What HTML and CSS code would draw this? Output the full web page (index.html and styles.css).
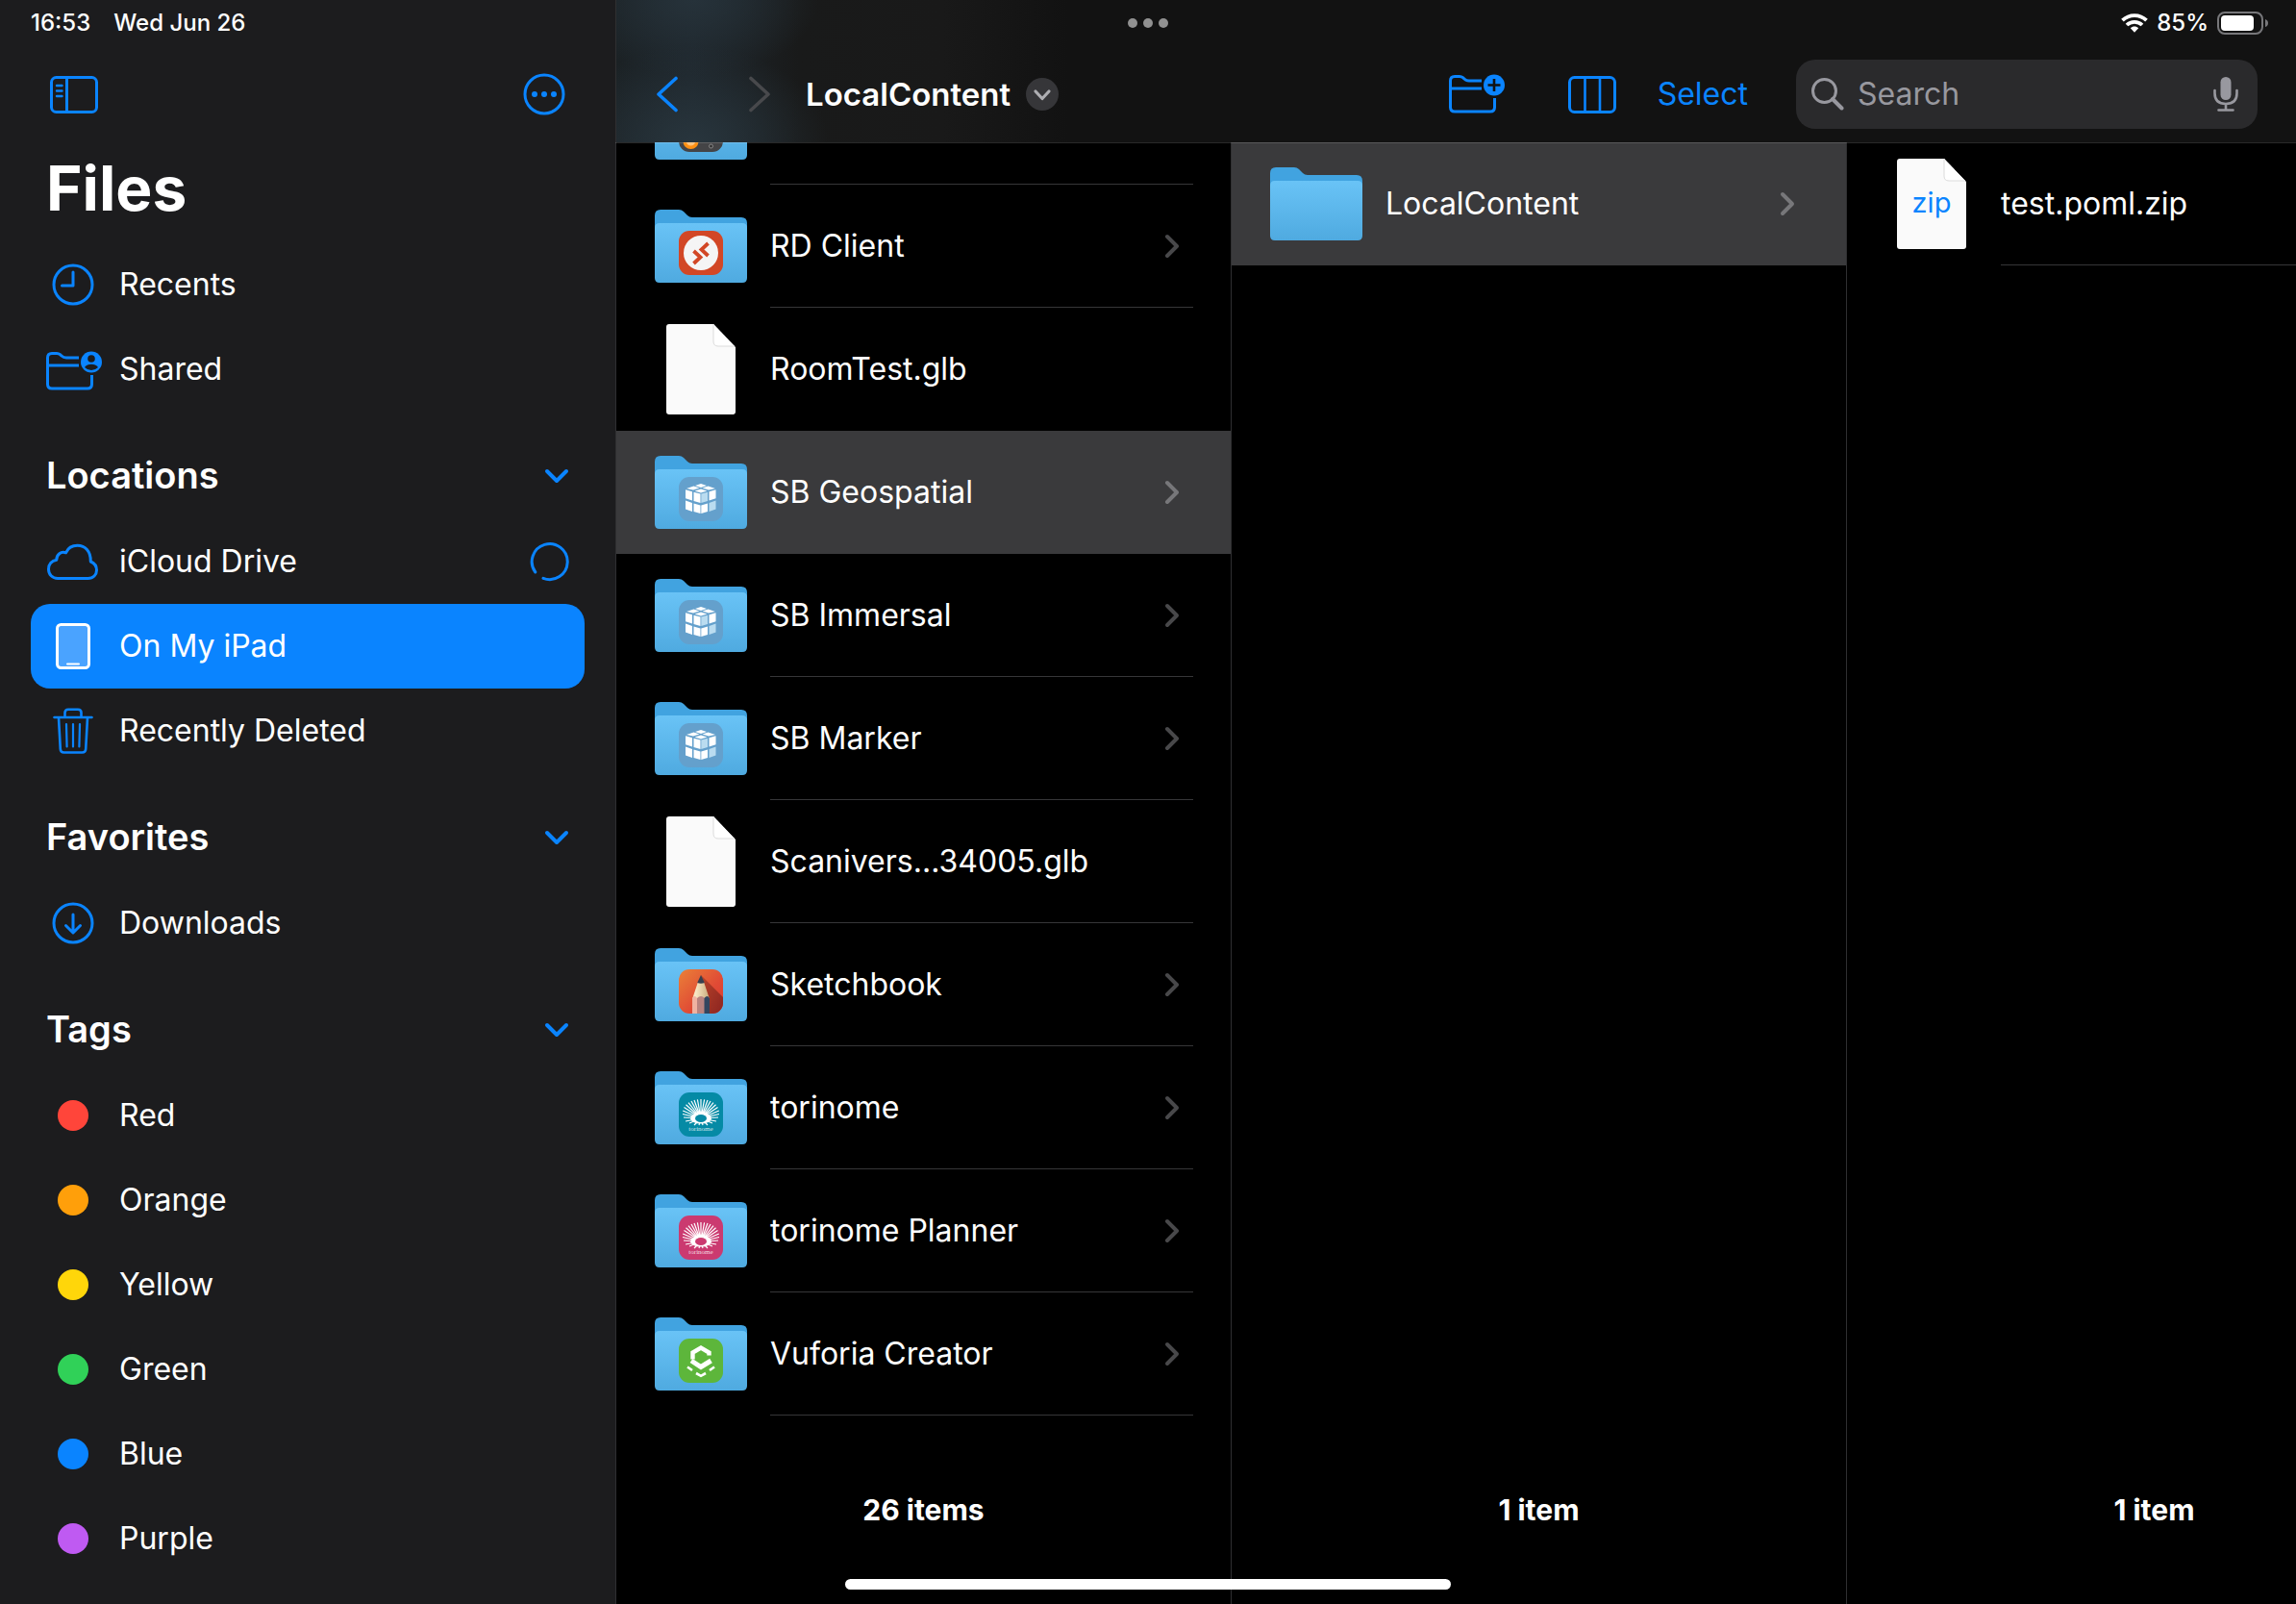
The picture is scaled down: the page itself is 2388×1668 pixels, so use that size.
FILE: index.html
```
<!DOCTYPE html>
<html lang="en">
<head>
<meta charset="utf-8">
<meta name="viewport" content="width=device-width, initial-scale=1">
<title>Files</title>
<link rel="stylesheet" href="styles.css">
</head>
<body>
<svg class="sprite" aria-hidden="true">
  <defs>
    <linearGradient id="folder-front" x1="0" y1="0" x2="0" y2="1"><stop offset="0" stop-color="#69c3f6"/><stop offset="1" stop-color="#4faae0"/></linearGradient>
    <linearGradient id="sketch-bg" x1="0" y1="0" x2="1" y2="1"><stop offset="0" stop-color="#ea8038"/><stop offset=".6" stop-color="#e04a35"/><stop offset="1" stop-color="#d8392f"/></linearGradient>
    <linearGradient id="sketch-shade" x1="0" y1="0" x2="1" y2="1"><stop offset="0" stop-color="#b8442a"/><stop offset="1" stop-color="#8c2420"/></linearGradient>
    <linearGradient id="wood" x1="0" y1="0" x2="1" y2="0"><stop offset=".2" stop-color="#f8e8c4"/><stop offset="1" stop-color="#c9ab7c"/></linearGradient>
    <clipPath id="app-clip"><rect width="46" height="46" rx="11"/></clipPath>
  </defs>
  <symbol id="folder" viewBox="0 0 96 76">
    <path d="M0 20V6Q0 0 6 0H25Q28 0 30 2L34 6Q36 8 39 8H90Q96 8 96 14V20Z" fill="#41a3e0"/>
    <path d="M0 19Q0 14 5 14H91Q96 14 96 19V71Q96 76 91 76H5Q0 76 0 71Z" fill="url(#folder-front)"/>
  </symbol>
  <symbol id="file" viewBox="0 0 72 94">
    <path d="M3 0H49L72 24V91Q72 94 69 94H3Q0 94 0 91V3Q0 0 3 0Z" fill="#fafafa"/>
    <path d="M49 0V18Q49 23 54 23H71" fill="#fff" stroke="#dcdcdc" stroke-width="1"/>
  </symbol>
  <symbol id="chevron" viewBox="0 0 16 26"><path d="M3 3L13 13L3 23" fill="none" stroke="currentColor" stroke-width="4" stroke-linecap="round" stroke-linejoin="round"/></symbol>
  <symbol id="chevron-down" viewBox="0 0 26 20"><path d="M3 6L13 16L23 6" fill="none" stroke="currentColor" stroke-width="4" stroke-linecap="round" stroke-linejoin="round"/></symbol>
  <symbol id="folder-outline" viewBox="0 0 60 48">
    <path d="M36 12H23Q20 12 18 10L16.500 8.700Q15 7.500 13 7.500H8Q3.500 7.500 3.500 12V39.500Q3.500 44 8 44H45Q49.500 44 49.500 39.500V30M3.500 20H36" fill="none" stroke="currentColor" stroke-width="3"/>
    <circle cx="49" cy="16.500" r="11" fill="currentColor"/>
  </symbol>
  <symbol id="cubes" viewBox="0 0 46 46">
    <rect width="46" height="46" rx="11" fill="#64a0cc"/>
    <path d="M23 7L29 9L23 11L17 9ZM15.500 9.500L21.500 11.500L15 13.500L8 12ZM30.500 9.500L38 12L31 13.500L24.500 11.500ZM23 12.500L29.500 14.500L23 16.500L16.500 14.500ZM7 13.300L14 15.300V24.500L7 22.300ZM15.500 15.700L22.500 17.500V27L15.500 25ZM31.500 15.300L38.500 13.300V22.300L31.500 24.500ZM7 24.500L14 27V36L7 33.500ZM15.500 27.500L22.500 29.500V38L15.500 36ZM23.300 29.500L30 27.500V36L23.300 38Z" fill="#fff"/>
    <path d="M23.300 17.500L30 15.700V25L23.300 27ZM31.500 27L38.500 24.500V33.500L31.500 36Z" fill="#badcf0"/>
  </symbol>
  <symbol id="fan" viewBox="0 0 46 46">
    <rect width="46" height="46" rx="11" fill="currentColor"/>
    <path d="M23 27L41 26M23 27L42 22.500M23 27L41.800 19M23 27L40.500 15.500M23 27L38.500 12.800M23 27L36 10.600M23 27L33 9M23 27L30 8M23 27L26.600 7.300M23 27V7M23 27L19.400 7.300M23 27L16 8M23 27L13 9M23 27L10 10.600M23 27L7.500 12.800M23 27L5.500 15.500M23 27L4.200 19M23 27L4 22.500M23 27L5 26M23 27L7 30M23 27L11 32M23 27L16 34M23 27L21 34M23 27L25 34M23 27L30 34M23 27L35 32M23 27L39 30" stroke="#fff" stroke-width="1.200"/>
    <ellipse cx="23" cy="27" rx="11" ry="5.500" fill="#fff"/>
    <ellipse cx="23" cy="27" rx="6" ry="4" fill="currentColor"/>
  </symbol>
</svg>

<div class="app">
  <div class="status">
    <div class="status-left"><span>16:53</span><span>Wed Jun 26</span></div>
    <svg width="42" height="10" viewBox="0 0 42 10" fill="#919191" aria-hidden="true"><circle cx="5" cy="5" r="5"/><circle cx="21" cy="5" r="5"/><circle cx="37" cy="5" r="5"/></svg>
    <div class="status-right">
      <svg width="28" height="20" viewBox="0 0 28 20" fill="none" stroke="#fff" stroke-width="3.800" aria-hidden="true"><path d="M1.500 7.200C8.500 .4 19.500 .4 26.500 7.200M6 12C10.500 7.700 17.500 7.700 22 12"/><path d="M9.800 15.200C12.200 13 15.800 13 18.200 15.200L14 19.800Z" fill="#fff" stroke="none"/></svg>
      <span>85%</span>
      <svg width="54" height="24" viewBox="0 0 54 24" aria-hidden="true"><rect x="1" y="1" width="46" height="22" rx="7" fill="none" stroke="#77777a" stroke-width="2"/><rect x="4" y="4" width="34" height="16" rx="4" fill="#fff"/><path d="M50 8Q53 9 53 12T50 16Z" fill="#77777a"/></svg>
    </div>
  </div>

  <aside class="sidebar">
    <div class="side-tools">
      <button class="tool" aria-label="Toggle sidebar"><svg width="50" height="39" viewBox="0 0 50 39" fill="none" stroke="currentColor" stroke-width="3"><rect x="1.500" y="1.500" width="47" height="36" rx="5"/><path d="M17.500 2V38"/><path d="M7 10H12.500M7 15.500H12.500M7 21H12.500" stroke-width="2.400" stroke-linecap="round"/></svg></button>
      <button class="tool" aria-label="More"><svg width="44" height="44" viewBox="0 0 44 44"><circle cx="22" cy="22" r="20" fill="none" stroke="currentColor" stroke-width="3"/><g fill="currentColor"><circle cx="12" cy="22" r="3"/><circle cx="22" cy="22" r="3"/><circle cx="32" cy="22" r="3"/></g></svg></button>
    </div>
    <h1>Files</h1>
    <nav>
      <a class="item" href="#recents"><svg class="icon" viewBox="0 0 60 48"><g fill="none" stroke="currentColor" stroke-width="3" stroke-linecap="round" stroke-linejoin="round"><circle cx="30" cy="24" r="20"/><path d="M30 11V25H18.500"/></g></svg>Recents</a>
      <a class="item" href="#shared"><svg class="icon" viewBox="0 0 60 48"><use href="#folder-outline"/><circle cx="49" cy="13" r="3.800" fill="#1c1c1e"/><path d="M42 22Q44.500 18.800 49 18.800T56 22Q53 25 49 25T42 22Z" fill="#1c1c1e"/></svg>Shared</a>

      <h2>Locations<button class="tool" aria-label="Collapse Locations"><svg width="26" height="20"><use href="#chevron-down"/></svg></button></h2>
      <a class="item" href="#icloud"><svg class="icon" viewBox="0 0 60 48"><path d="M14 41.500H45.500C51 41.500 54.500 37.700 54.500 33C54.500 28.500 52 25.500 48.300 24C48.500 13 42.500 7.300 34.500 7.300C28.500 7.300 24.500 10.300 22.500 14.800C17.500 13 12.800 16.500 12.800 22.200C8 23 4.500 26.500 4.500 32C4.500 37.500 8.500 41.500 14 41.500Z" fill="none" stroke="currentColor" stroke-width="3" stroke-linejoin="round"/></svg>iCloud Drive<svg class="spinner" width="42" height="42" viewBox="0 0 42 42"><path d="M5.800 32A18.500 18.500 0 1 1 14 38.300" fill="none" stroke="currentColor" stroke-width="3" stroke-linecap="round"/></svg></a>
      <a class="item selected" href="#ipad" aria-current="page"><svg class="icon" viewBox="0 0 60 48"><rect x="13.500" y="1.500" width="33" height="45" rx="4" fill="#4aa3ff" stroke="#fff" stroke-width="3"/><path d="M24 42.500H36" stroke="#fff" stroke-width="2" stroke-linecap="round"/></svg>On My iPad</a>
      <a class="item" href="#deleted"><svg class="icon" viewBox="0 0 60 48"><g fill="none" stroke="currentColor" stroke-width="2.600" stroke-linecap="round" stroke-linejoin="round"><path d="M10.500 10H49.500M21.500 9.500V5Q21.500 1.800 25 1.800H35Q38.500 1.800 38.500 5V9.500M15 10.500L16.800 43Q17 46.500 20.500 46.500H39.500Q43 46.500 43.200 43L45 10.500"/><path d="M23 17L23.600 40.500M30 17V40.500M37 17L36.400 40.500" stroke-width="2.200"/></g></svg>Recently Deleted</a>

      <h2>Favorites<button class="tool" aria-label="Collapse Favorites"><svg width="26" height="20"><use href="#chevron-down"/></svg></button></h2>
      <a class="item" href="#downloads"><svg class="icon" viewBox="0 0 60 48"><g fill="none" stroke="currentColor" stroke-width="3" stroke-linecap="round" stroke-linejoin="round"><circle cx="30" cy="24" r="20"/><path d="M30 15V33.500M22.500 26.500L30 34L37.500 26.500"/></g></svg>Downloads</a>

      <h2>Tags<button class="tool" aria-label="Collapse Tags"><svg width="26" height="20"><use href="#chevron-down"/></svg></button></h2>
      <a class="item" href="#red"><span class="dot red"></span>Red</a>
      <a class="item" href="#orange"><span class="dot orange"></span>Orange</a>
      <a class="item" href="#yellow"><span class="dot yellow"></span>Yellow</a>
      <a class="item" href="#green"><span class="dot green"></span>Green</a>
      <a class="item" href="#blue"><span class="dot blue"></span>Blue</a>
      <a class="item" href="#purple"><span class="dot purple"></span>Purple</a>
    </nav>
  </aside>

  <main class="browser">
    <header class="toolbar">
      <div class="history">
        <button class="tool" aria-label="Back"><svg width="24" height="38" viewBox="0 0 24 38"><path d="M21 2.500L3 19L21 35.500" fill="none" stroke="currentColor" stroke-width="3.600" stroke-linecap="round" stroke-linejoin="round"/></svg></button>
        <button class="tool" aria-label="Forward" disabled><svg width="24" height="38" viewBox="0 0 24 38"><path d="M3 2.500L21 19L3 35.500" fill="none" stroke="currentColor" stroke-width="3.600" stroke-linecap="round" stroke-linejoin="round"/></svg></button>
      </div>
      <button class="location">LocalContent<svg width="34" height="34" viewBox="0 0 34 34"><circle cx="17" cy="17" r="17" fill="#363639"/><path d="M10 14L17 21.500L24 14" fill="none" stroke="#aeaeb2" stroke-width="3.200" stroke-linecap="round" stroke-linejoin="round"/></svg></button>
      <div class="actions">
        <button class="tool" aria-label="New folder"><svg width="60" height="48" viewBox="0 2 60 48"><use href="#folder-outline" width="60" height="48"/><path d="M49 10V23M42.500 16.500H55.500" stroke="#121212" stroke-width="2.600"/></svg></button>
        <button class="tool" aria-label="Column view"><svg width="50" height="39" viewBox="0 0 50 39" fill="none" stroke="currentColor" stroke-width="3"><rect x="1.500" y="1.500" width="47" height="36" rx="5"/><path d="M17.500 2V38M33 2V38" stroke-width="2.600"/></svg></button>
        <button class="tool select">Select</button>
      </div>
      <label class="search">
        <svg width="34" height="34" viewBox="0 0 34 34" fill="none" stroke="currentColor"><circle cx="13.500" cy="13.500" r="12" stroke-width="3"/><path d="M22 22L31.500 31.500" stroke-width="4" stroke-linecap="round"/></svg>
        <input type="search" placeholder="Search" aria-label="Search">
        <svg width="26" height="36" viewBox="0 0 26 36" aria-hidden="true"><rect x="7.500" y="0" width="11" height="24" rx="5.500" fill="currentColor"/><path d="M1.500 14V17Q1.500 28 13 28T24.500 17V14M13 28V34M5.500 34.500H20.500" fill="none" stroke="currentColor" stroke-width="2.600" stroke-linecap="round"/></svg>
      </label>
    </header>

    <div class="columns">
      <section class="column">
        <div class="row clipped">
          <span class="thumb"><svg width="96" height="76" viewBox="0 0 96 76"><use href="#folder" width="96" height="76"/><g transform="translate(25 22)"><rect width="46" height="46" rx="11" fill="#444446"/><circle cx="12.500" cy="35" r="8" fill="#ff9012"/><circle cx="12.500" cy="35" r="4.500" fill="#ffc27a"/><circle cx="33.500" cy="40" r="2" fill="#333" stroke="#999" stroke-width=".8"/></g></svg></span>
          <span class="label"></span>
        </div>
        <a class="row" href="#rd-client">
          <span class="thumb"><svg width="96" height="76" viewBox="0 0 96 76"><use href="#folder" width="96" height="76"/><g transform="translate(25 22)"><rect width="46" height="46" rx="11" fill="#d24726"/><circle cx="23" cy="23" r="18" fill="#f5f5f5"/><path d="M15.500 21L22.500 27.500L15.500 34M30.500 13L23.500 19.500L30.500 26" fill="none" stroke="#d24726" stroke-width="3.800"/></g></svg></span>
          <span class="label">RD Client<svg class="go"><use href="#chevron"/></svg></span>
        </a>
        <a class="row bare" href="#roomtest">
          <span class="thumb"><svg width="72" height="94"><use href="#file"/></svg></span>
          <span class="label">RoomTest.glb</span>
        </a>
        <a class="row current" href="#sb-geospatial">
          <span class="thumb"><svg width="96" height="76" viewBox="0 0 96 76"><use href="#folder" width="96" height="76"/><use href="#cubes" x="25" y="22" width="46" height="46"/></svg></span>
          <span class="label">SB Geospatial<svg class="go"><use href="#chevron"/></svg></span>
        </a>
        <a class="row" href="#sb-immersal">
          <span class="thumb"><svg width="96" height="76" viewBox="0 0 96 76"><use href="#folder" width="96" height="76"/><use href="#cubes" x="25" y="22" width="46" height="46"/></svg></span>
          <span class="label">SB Immersal<svg class="go"><use href="#chevron"/></svg></span>
        </a>
        <a class="row" href="#sb-marker">
          <span class="thumb"><svg width="96" height="76" viewBox="0 0 96 76"><use href="#folder" width="96" height="76"/><use href="#cubes" x="25" y="22" width="46" height="46"/></svg></span>
          <span class="label">SB Marker<svg class="go"><use href="#chevron"/></svg></span>
        </a>
        <a class="row" href="#scaniverse">
          <span class="thumb"><svg width="72" height="94"><use href="#file"/></svg></span>
          <span class="label">Scanivers...34005.glb</span>
        </a>
        <a class="row" href="#sketchbook">
          <span class="thumb"><svg width="96" height="76" viewBox="0 0 96 76"><use href="#folder" width="96" height="76"/><g transform="translate(25 22)" clip-path="url(#app-clip)"><rect width="46" height="46" fill="url(#sketch-bg)"/><path d="M23 6L46 29V46H30Z" fill="url(#sketch-shade)"/><path d="M20 13H26L32 31V34H14V31Z" fill="url(#wood)"/><path d="M23 6L26.800 14Q23 15.500 19.200 14Z" fill="#37404f"/><path d="M14 46V30Q16.500 26 19 30V46Z" fill="#f0b3a2"/><path d="M19 46V30Q23 26 27 30V46Z" fill="#b98480"/><path d="M26.500 46V30Q29.500 26 32 30V46Z" fill="#33465f"/></g></svg></span>
          <span class="label">Sketchbook<svg class="go"><use href="#chevron"/></svg></span>
        </a>
        <a class="row" href="#torinome">
          <span class="thumb"><svg class="teal" width="96" height="76" viewBox="0 0 96 76"><use href="#folder" width="96" height="76"/><use href="#fan" x="25" y="22" width="46" height="46"/><text x="48" y="62" class="fan-name">torinome</text></svg></span>
          <span class="label">torinome<svg class="go"><use href="#chevron"/></svg></span>
        </a>
        <a class="row" href="#torinome-planner">
          <span class="thumb"><svg class="pink" width="96" height="76" viewBox="0 0 96 76"><use href="#folder" width="96" height="76"/><use href="#fan" x="25" y="22" width="46" height="46"/><text x="48" y="62" class="fan-name">torinome</text></svg></span>
          <span class="label">torinome Planner<svg class="go"><use href="#chevron"/></svg></span>
        </a>
        <a class="row" href="#vuforia">
          <span class="thumb"><svg width="96" height="76" viewBox="0 0 96 76"><use href="#folder" width="96" height="76"/><g transform="translate(25 22)"><rect width="46" height="46" rx="11" fill="#5db63b"/><g fill="none" stroke="#fff"><path d="M31.500 17.500V14.500L23 9.500L14.500 14.500V21.500" stroke-width="4.400"/><path d="M13 23L23 29.500L33.500 23" stroke-width="5"/><path d="M9 29.500L14 33M37 29.500L32 33M18 36L23 38.800L28 36" stroke-width="2.600"/></g></g></svg></span>
          <span class="label">Vuforia Creator<svg class="go"><use href="#chevron"/></svg></span>
        </a>
        <p class="count">26 items</p>
      </section>

      <section class="column">
        <a class="row current" href="#localcontent">
          <span class="thumb"><svg width="96" height="76"><use href="#folder"/></svg></span>
          <span class="label">LocalContent<svg class="go"><use href="#chevron"/></svg></span>
        </a>
        <p class="count">1 item</p>
      </section>

      <section class="column">
        <a class="row" href="#test-poml">
          <span class="thumb"><svg width="72" height="94" viewBox="0 0 72 94"><use href="#file"/><text x="36" y="56" class="file-type">zip</text></svg></span>
          <span class="label">test.poml.zip</span>
        </a>
        <p class="count">1 item</p>
      </section>
    </div>
  </main>

  <div class="home-bar"></div>
</div>
</body>
</html>
```
FILE: styles.css
```
* { box-sizing: border-box; }

body {
  margin: 0;
  background: #000;
  color: #fff;
  font-family: Inter, "Liberation Sans", sans-serif;
  font-size: 32px;
  line-height: 40px;
}

a { color: inherit; text-decoration: none; }
svg { display: block; flex: none; }
button { font: inherit; background: none; border: 0; padding: 0; }

.sprite { position: absolute; width: 0; height: 0; }

.app {
  position: relative;
  display: flex;
  min-height: 100vh;
  overflow: hidden;
}

.tool { color: #0a84ff; }
.tool:disabled { color: #48494c; }

/* Status bar, laid over both panes */
.status {
  position: absolute;
  z-index: 2;
  inset: 0 0 auto 0;
  height: 48px;
  padding: 0 28px;
  display: grid;
  grid-template-columns: 1fr auto 1fr;
  align-items: center;
  font-size: 24px;
  font-weight: 500;
}
.status-left { display: flex; gap: 24px; padding-left: 4px; }
.status-right { display: flex; align-items: center; justify-content: flex-end; gap: 9px; }

/* Sidebar */
.sidebar {
  flex: 0 0 640px;
  padding-top: 48px;
  background: #1c1c1e;
}
.side-tools {
  height: 100px;
  padding: 0 52px;
  display: flex;
  align-items: center;
  justify-content: space-between;
}
h1 {
  margin: 0;
  padding: 8px 48px 16px;
  font-size: 64px;
  line-height: 80px;
  font-weight: 700;
}
h2 {
  margin: 0;
  height: 112px;
  padding: 20px 48px 0;
  display: flex;
  align-items: center;
  justify-content: space-between;
  font-size: 38px;
  font-weight: 600;
}
.item {
  height: 88px;
  margin: 0 32px;
  padding: 0 15px 0 14px;
  display: flex;
  align-items: center;
  gap: 18px;
  border-radius: 20px;
}
.icon { width: 60px; height: 48px; color: #0a84ff; }
.item.selected { background: #0a84ff; }
.spinner { margin-left: auto; color: #0a84ff; }
.dot { width: 32px; height: 32px; margin: 0 14px; border-radius: 50%; }
.red { background: #ff453a; }
.orange { background: #ff9f0a; }
.yellow { background: #ffd60a; }
.green { background: #30d158; }
.blue { background: #0a84ff; }
.purple { background: #bf5af2; }

/* Browser pane */
.browser {
  flex: 1;
  min-width: 0;
  display: flex;
  flex-direction: column;
}
.toolbar {
  position: relative;
  z-index: 1;
  height: 148px;
  padding: 48px 40px 0 41px;
  display: flex;
  align-items: center;
  border-left: 1px solid #2f2f31;
  background:
    radial-gradient(ellipse 130px 80px at 80px 0, #26323a, transparent),
    radial-gradient(ellipse 140px 100px at 80px 148px, #28353d, transparent),
    linear-gradient(90deg, #1b2124 0, #1e262c 80px, #191a1a 190px, #191919 340px, #121212 470px);
  box-shadow: 0 1px 0 rgba(255, 255, 255, .16);
}
.history { display: flex; gap: 72px; }
.location {
  margin-left: 36px;
  display: flex;
  align-items: center;
  gap: 16px;
  color: #fff;
  font-size: 33px;
  font-weight: 600;
}
.actions {
  margin-left: auto;
  margin-right: 50px;
  display: flex;
  align-items: center;
}
.actions .tool + .tool { margin-left: 66px; }
.actions .tool + .select { margin-left: 43px; }
.search {
  flex: 0 0 480px;
  min-width: 0;
  height: 72px;
  padding: 0 20px 0 16px;
  display: flex;
  align-items: center;
  gap: 14px;
  border-radius: 20px;
  background: #2a2a2c;
  color: #98989f;
}
.search input {
  flex: 1;
  min-width: 0;
  padding: 0;
  border: 0;
  outline: 0;
  background: none;
  color: #fff;
  font: inherit;
}
.search input::placeholder { color: #98989f; opacity: 1; }

.columns { flex: 1; display: flex; overflow: hidden; }
.column {
  flex: 0 0 640px;
  display: flex;
  flex-direction: column;
  border-left: 1px solid #2f2f31;
}
.row {
  height: 128px;
  padding: 0 39px 0 40px;
  display: flex;
  gap: 24px;
}
.thumb {
  flex: 0 0 96px;
  display: flex;
  align-items: center;
  justify-content: center;
}
.label {
  flex: 1;
  padding-right: 14px;
  display: flex;
  align-items: center;
  justify-content: space-between;
  border-bottom: 1px solid #363638;
}
.go { width: 16px; height: 26px; color: #48484a; }
.current { background: #3a3a3c; }
.current .go { color: #77777a; }
.current .label, .bare .label { border-color: transparent; }

/* Row scrolled partly under the toolbar */
.row.clipped { height: 44px; overflow: hidden; }
.clipped .thumb { align-items: flex-end; padding-bottom: 26px; }

.count {
  margin: auto 0 0;
  padding-bottom: 78px;
  text-align: center;
  font-size: 30px;
  font-weight: 700;
}

.teal { color: #058aa5; }
.pink { color: #cb3a70; }
.fan-name { font: 7px "Liberation Serif", serif; fill: #fff; fill-opacity: .8; text-anchor: middle; }
.file-type { font-size: 29px; fill: #0a84ff; text-anchor: middle; }

.home-bar {
  position: absolute;
  z-index: 2;
  bottom: 15px;
  left: 50%;
  width: 630px;
  height: 11px;
  border-radius: 6px;
  background: #fff;
  transform: translateX(-50%);
}
```
